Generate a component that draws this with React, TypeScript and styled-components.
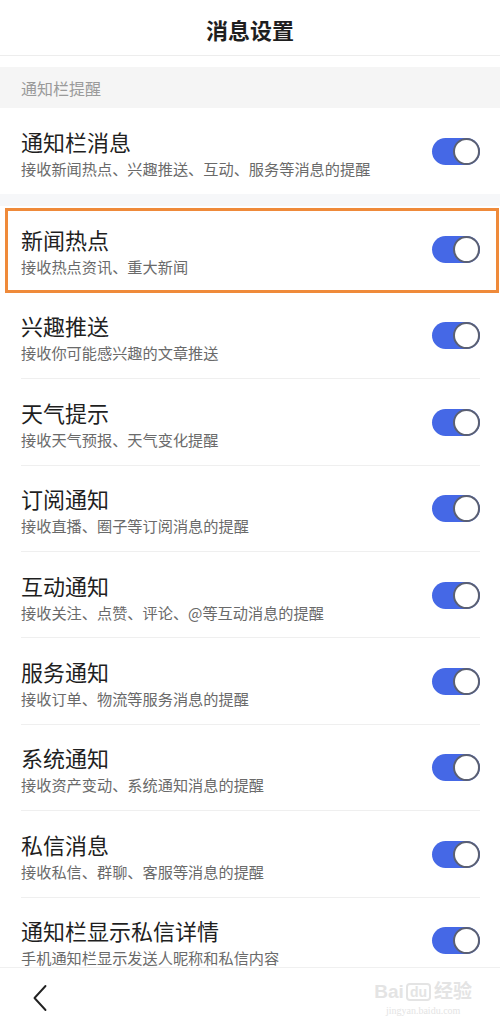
import styled, { createGlobalStyle } from "styled-components";

const GlobalStyle = createGlobalStyle`
  html, body {
    margin: 0;
    padding: 0;
    background: #ffffff;
  }
  body {
    font-family: "Noto Sans CJK SC", "Noto Sans", sans-serif;
    -webkit-font-smoothing: antialiased;
  }
`;

const items = [
  { title: "通知栏消息", desc: "接收新闻热点、兴趣推送、互动、服务等消息的提醒" },
  { title: "新闻热点", desc: "接收热点资讯、重大新闻", highlight: true },
  { title: "兴趣推送", desc: "接收你可能感兴趣的文章推送" },
  { title: "天气提示", desc: "接收天气预报、天气变化提醒" },
  { title: "订阅通知", desc: "接收直播、圈子等订阅消息的提醒" },
  { title: "互动通知", desc: "接收关注、点赞、评论、@等互动消息的提醒" },
  { title: "服务通知", desc: "接收订单、物流等服务消息的提醒" },
  { title: "系统通知", desc: "接收资产变动、系统通知消息的提醒" },
  { title: "私信消息", desc: "接收私信、群聊、客服等消息的提醒" },
  { title: "通知栏显示私信详情", desc: "手机通知栏显示发送人昵称和私信内容" },
];

const Toggle = ({ on = true }: { on?: boolean }) => (
  <Track $on={on}>
    <Knob />
  </Track>
);

const App = () => {
  return (
    <>
      <GlobalStyle />
      <Page>
        <Header>消息设置</Header>
        <Content>
          <SectionLabel>通知栏提醒</SectionLabel>
          <Row $divider={false}>
            <TextBlock>
              <Title>{items[0].title}</Title>
              <Desc>{items[0].desc}</Desc>
            </TextBlock>
            <Toggle />
          </Row>
          <Gap />
          {items.slice(1).map((item, i) => (
            <Row
              key={item.title}
              $highlight={item.highlight}
              $divider={i > 0 && i < items.length - 2}
            >
              <TextBlock>
                <Title>{item.title}</Title>
                <Desc>{item.desc}</Desc>
              </TextBlock>
              <Toggle />
            </Row>
          ))}
        </Content>
        <BottomBar>
          <BackButton aria-label="返回">
            <svg width="16" height="28" viewBox="0 0 16 28" fill="none">
              <path
                d="M13.5 2 L2.5 14 L13.5 26"
                stroke="#222"
                strokeWidth="1.9"
                strokeLinecap="round"
                strokeLinejoin="round"
              />
            </svg>
          </BackButton>
          <Watermark>
            <WatermarkLogo>
              Bai<DuBox>du</DuBox>经验
            </WatermarkLogo>
            <WatermarkUrl>jingyan.baidu.com</WatermarkUrl>
          </Watermark>
        </BottomBar>
      </Page>
    </>
  );
};

const Page = styled.div`
  width: 500px;
  height: 1026px;
  display: flex;
  flex-direction: column;
  background: #ffffff;
  overflow: hidden;
`;

const Header = styled.header`
  flex: 0 0 56px;
  box-sizing: border-box;
  display: flex;
  align-items: center;
  justify-content: center;
  font-size: 22px;
  font-weight: 700;
  color: #1e1e1e;
  border-bottom: 1px solid #ededed;
  padding-top: 2px;
`;

const Content = styled.main`
  flex: 1;
  overflow: hidden;
  padding-top: 11px;
`;

const SectionLabel = styled.div`
  height: 41px;
  display: flex;
  align-items: center;
  padding-left: 21px;
  background: #f5f5f5;
  color: #9a9a9a;
  font-size: 16px;
`;

const Gap = styled.div`
  height: 12px;
  background: #f6f7f9;
`;

const Row = styled.div<{ $highlight?: boolean; $divider?: boolean }>`
  position: relative;
  height: 86.4px;
  box-sizing: border-box;
  display: flex;
  align-items: center;
  justify-content: space-between;
  padding: 0 20px 0 21px;
  &::before {
    content: "";
    display: ${(p) => (p.$divider ? "block" : "none")};
    position: absolute;
    left: 21px;
    right: 20px;
    bottom: 0;
    height: 1px;
    background: #efefef;
  }
  &::after {
    content: "";
    display: ${(p) => (p.$highlight ? "block" : "none")};
    position: absolute;
    left: 5px;
    right: 1px;
    top: 2px;
    bottom: 0;
    border: 3px solid #ef8a3a;
    pointer-events: none;
  }
`;

const TextBlock = styled.div`
  display: flex;
  flex-direction: column;
  gap: 5px;
  margin-top: 1px;
`;

const Title = styled.div`
  font-size: 22px;
  line-height: 28px;
  color: #1f1f1f;
`;

const Desc = styled.div`
  font-size: 15.2px;
  line-height: 17px;
  color: #6a6a6a;
`;

const Track = styled.div<{ $on: boolean }>`
  width: 48px;
  height: 27px;
  border-radius: 14px;
  background: ${(p) => (p.$on ? "#4568e6" : "#d8d8d8")};
  display: flex;
  align-items: center;
  justify-content: ${(p) => (p.$on ? "flex-end" : "flex-start")};
`;

const Knob = styled.div`
  width: 27px;
  height: 27px;
  box-sizing: border-box;
  border-radius: 50%;
  background: #ffffff;
  border: 2px solid #5b6072;
`;

const BottomBar = styled.footer`
  flex: 0 0 58px;
  display: flex;
  align-items: center;
  justify-content: space-between;
  padding: 0 28px 0 32px;
  border-top: 1px solid #f0f0f0;
  background: #ffffff;
`;

const BackButton = styled.button`
  border: none;
  background: none;
  padding: 0;
  display: flex;
  align-items: center;
  margin-top: 2px;
`;

const Watermark = styled.div`
  display: flex;
  flex-direction: column;
  align-items: center;
  color: #e4e4e4;
  margin-top: 6px;
`;

const WatermarkLogo = styled.div`
  font-family: "Liberation Sans", "Noto Sans CJK SC", sans-serif;
  font-size: 19px;
  font-weight: 700;
  line-height: 20px;
  display: flex;
  align-items: center;
`;

const DuBox = styled.span`
  border: 2px solid #e4e4e4;
  border-radius: 4px;
  font-size: 14px;
  line-height: 14px;
  padding: 0 2px;
  margin: 0 3px 0 2px;
`;

const WatermarkUrl = styled.div`
  font-family: "Liberation Serif", serif;
  font-size: 10px;
  line-height: 14px;
  margin-top: 2px;
`;

export default App;
